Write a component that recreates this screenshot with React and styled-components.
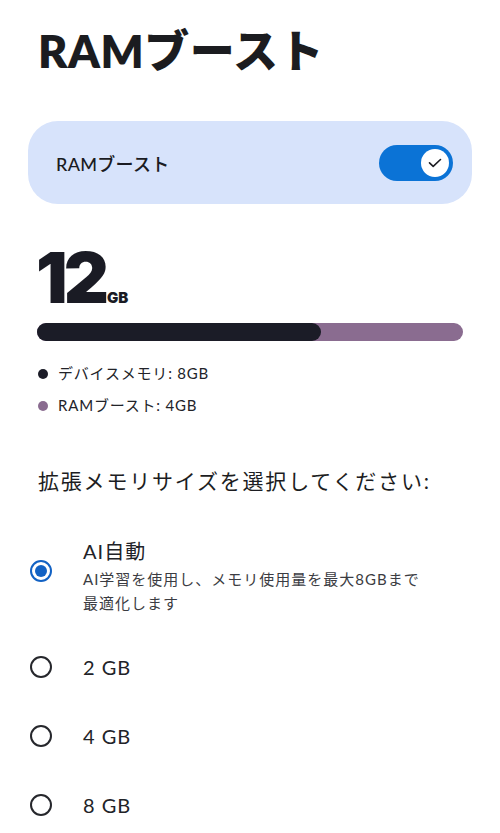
import React from "react";
import styled, { createGlobalStyle } from "styled-components";

const Global = createGlobalStyle`
  html, body { margin: 0; padding: 0; background: #ffffff; overflow: hidden; }
  body { font-family: "Lato", "Noto Sans CJK JP", sans-serif; color: #1c1d22; }
`;

const Page = styled.div`
  width: 500px;
  min-height: 833px;
  box-sizing: border-box;
  padding: 20px 28px 0 28px;
  display: flex;
  flex-direction: column;
  & > * { flex-shrink: 0; }
`;

const Title = styled.h1`
  margin: 0 0 0 10px;
  font-family: "Lato", "Noto Sans CJK JP", sans-serif;
  font-weight: 800;
  font-size: 45px;
  line-height: 62px;
  color: #1b1c20;
  letter-spacing: 0.5px;
`;

const ToggleCard = styled.div`
  margin-top: 39px;
  height: 83px;
  border-radius: 30px;
  background: #d7e3fb;
  display: flex;
  align-items: center;
  justify-content: space-between;
  padding: 0 19px 0 28px;
`;

const CardLabel = styled.span`
  font-family: "Lato", "Noto Sans CJK JP", sans-serif;
  font-size: 18px;
  font-weight: 500;
  color: #1a1b22;
  letter-spacing: 0.3px;
`;

const Track = styled.div`
  width: 74px;
  height: 36px;
  border-radius: 18px;
  background: #0b73d6;
  display: flex;
  align-items: center;
  justify-content: flex-end;
  padding-right: 4px;
  box-sizing: border-box;
`;

const Thumb = styled.div`
  width: 28px;
  height: 28px;
  border-radius: 50%;
  background: #ffffff;
  display: flex;
  align-items: center;
  justify-content: center;
`;

const Total = styled.div`
  margin: 39px 0 0 8px;
  height: 70px;
  display: flex;
  align-items: baseline;
  line-height: 1;
`;

const BigNum = styled.span`
  font-family: "Inter", "Lato", sans-serif;
  font-weight: 900;
  font-size: 70px;
  color: #1a1b24;
  letter-spacing: -4px;
`;

const Unit = styled.span`
  font-family: "Inter", "Lato", sans-serif;
  font-weight: 900;
  font-size: 15px;
  color: #1a1b24;
  margin-left: 2px;
`;

const Bar = styled.div`
  margin: 10px 9px 0 9px;
  height: 18px;
  border-radius: 9px;
  background: #8a6c90;
  display: flex;
`;

const BarFill = styled.div`
  height: 100%;
  border-radius: 9px;
  background: #1b1c27;
`;

const Legend = styled.div`
  margin: 23px 0 0 10px;
  display: flex;
  flex-direction: column;
  gap: 13px;
`;

const LegendRow = styled.div`
  display: flex;
  align-items: center;
  gap: 10px;
  font-family: "Lato", "Noto Sans CJK JP", sans-serif;
  font-size: 15px;
  line-height: 19px;
  color: #222329;
  letter-spacing: 0.8px;
`;

const Dot = styled.span`
  width: 10px;
  height: 10px;
  border-radius: 50%;
  background: ${(p) => p.$color};
`;

const Heading = styled.div`
  margin: 52px 0 0 10px;
  font-family: "Lato", "Noto Sans CJK JP", sans-serif;
  font-size: 21px;
  line-height: 28px;
  color: #1c1d22;
  letter-spacing: 1.8px;
`;

const Options = styled.div`
  margin-top: 42px;
  display: flex;
  flex-direction: column;
`;

const Option = styled.div`
  display: flex;
  align-items: center;
  min-height: ${(p) => (p.$tall ? "auto" : "69px")};
  padding-bottom: ${(p) => (p.$tall ? "17px" : "0")};
`;

const RadioOuter = styled.span`
  width: 22px;
  height: 22px;
  box-sizing: border-box;
  border-radius: 50%;
  border: 2px solid ${(p) => (p.$on ? "#1262c4" : "#26272c")};
  margin: 0 31px ${(p) => (p.$on ? "10px" : "0")} 2px;
  display: flex;
  align-items: center;
  justify-content: center;
  flex-shrink: 0;
`;

const RadioInner = styled.span`
  width: 12px;
  height: 12px;
  border-radius: 50%;
  background: #1262c4;
`;

const OptText = styled.div`
  display: flex;
  flex-direction: column;
`;

const OptTitle = styled.span`
  font-family: "Lato", "Noto Sans CJK JP", sans-serif;
  font-size: 20px;
  line-height: 28px;
  color: #222328;
  letter-spacing: 1px;
`;

const OptDesc = styled.span`
  margin-top: 2px;
  font-family: "Lato", "Noto Sans CJK JP", sans-serif;
  font-size: 15px;
  line-height: 24px;
  color: #3b3c42;
  letter-spacing: 1px;
  max-width: 345px;
`;

const Check = () => (
  <svg width="14" height="10" viewBox="0 0 14 10">
    <path d="M1.5 4.8 L5.2 8.3 L12.5 1.5" fill="none" stroke="#1b1c22" strokeWidth="1.6" strokeLinecap="round" strokeLinejoin="round" />
  </svg>
);

export default function App() {
  const sizes = ["2 GB", "4 GB", "8 GB"];
  return (
    <>
      <Global />
      <Page>
        <Title>RAMブースト</Title>
        <ToggleCard>
          <CardLabel>RAMブースト</CardLabel>
          <Track>
            <Thumb>
              <Check />
            </Thumb>
          </Track>
        </ToggleCard>
        <Total>
          <BigNum>12</BigNum>
          <Unit>GB</Unit>
        </Total>
        <Bar>
          <BarFill style={{ width: `${(8 / 12) * 100}%` }} />
        </Bar>
        <Legend>
          <LegendRow>
            <Dot $color="#1b1c27" />
            デバイスメモリ: 8GB
          </LegendRow>
          <LegendRow>
            <Dot $color="#8a6c90" />
            RAMブースト: 4GB
          </LegendRow>
        </Legend>
        <Heading>拡張メモリサイズを選択してください:</Heading>
        <Options>
          <Option $tall>
            <RadioOuter $on>
              <RadioInner />
            </RadioOuter>
            <OptText>
              <OptTitle>AI自動</OptTitle>
              <OptDesc>AI学習を使用し、メモリ使用量を最大8GBまで最適化します</OptDesc>
            </OptText>
          </Option>
          {sizes.map((s) => (
            <Option key={s}>
              <RadioOuter />
              <OptTitle>{s}</OptTitle>
            </Option>
          ))}
        </Options>
      </Page>
    </>
  );
}
